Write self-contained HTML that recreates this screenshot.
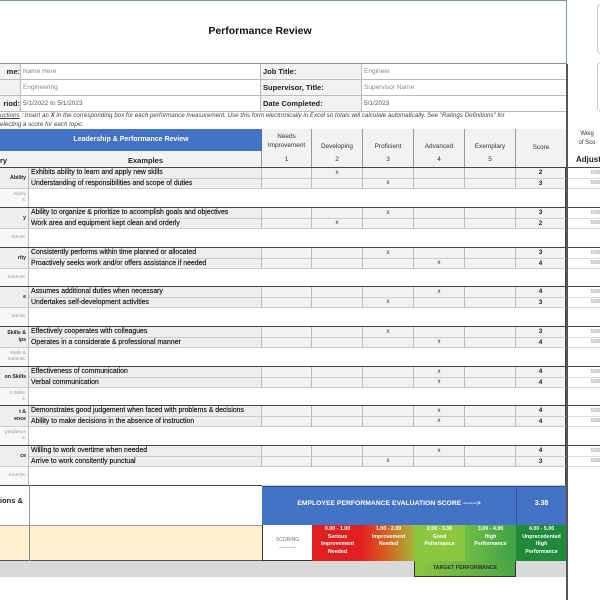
<!DOCTYPE html>
<html><head><meta charset="utf-8"><style>
*{margin:0;padding:0;box-sizing:border-box}
body{width:600px;height:600px;overflow:hidden;background:#fff;font-family:"Liberation Sans",sans-serif;position:relative;color:#222}
.a{position:absolute}
.g{position:absolute;left:0;width:600px;height:40px;display:grid;grid-template-columns:29px 233px 50px 51px 51px 51px 51px 50px 34px;grid-template-rows:10.5px 10.5px 19px;border-top:1.5px solid #444}
.g div{border-right:1px solid #bbb;border-bottom:1px solid #ccc;font-size:6.4px;overflow:hidden;white-space:nowrap;display:flex;align-items:center}
.g .c{grid-row:1/3;background:#eee;font-size:5.2px;font-weight:bold;justify-content:flex-end;padding-right:2px;white-space:normal;text-align:right;line-height:7px}
.g .e{background:#eee;padding-left:2px;font-size:6.9px;color:#111;-webkit-text-stroke:0.15px #111}
.g .r{background:#f2f2f2;justify-content:center;font-size:6px;color:#333}
.g .s{background:#f2f2f2;justify-content:center;font-weight:bold;border-right:1.5px solid #444}
.g .w{justify-content:flex-end;color:#888;font-size:5.5px;border-right:none;border-bottom:1px solid #ddd}
.g .cl{background:#f7f7f7;font-size:4.8px;color:#999;justify-content:flex-end;padding-right:2px;white-space:normal;text-align:right;line-height:6px}
.g .cm{grid-column:2/9;background:#fff;border-right:1.5px solid #444}
.g .cw{border:none}
.inf{position:absolute;height:16px;border-bottom:1px solid #bbb;border-right:1px solid #bbb;font-size:6.5px;display:flex;align-items:center;padding-left:2px}
.lb{font-weight:bold;font-size:7.5px;background:#f2f2f2}
.vl{color:#888}
.hd{position:absolute;top:129px;height:39px;border-right:1px solid #999;border-bottom:1.5px solid #444;background:#f2f2f2;font-size:6.4px;text-align:center;color:#333}
.hd span{position:absolute;left:0;right:0}
.sc{position:absolute;top:525px;height:36px;color:#fff;font-size:5.3px;font-weight:bold;text-align:center;line-height:7.5px;padding-top:1px}
</style></head><body>
<div class="a" style="left:0;top:0;width:567px;height:64px;border-top:1px solid #7a9a8a;border-right:1px solid #7a9a8a;border-bottom:1px solid #7a9a8a"></div>
<div class="a" style="left:0;top:25px;width:520px;text-align:center;font-weight:bold;font-size:10.5px;color:#111">Performance Review</div>
<div class="a" style="left:597px;top:4px;width:10px;height:50px;border:1px solid #ccc;border-radius:4px"></div>
<div class="a" style="left:597px;top:62px;width:10px;height:50px;border:1px solid #ccc;border-radius:4px"></div>
<div class="inf lb" style="left:0;top:64px;width:21px;justify-content:flex-end">me:</div>
<div class="inf vl" style="left:21px;top:64px;width:240px">Name Here</div>
<div class="inf lb" style="left:261px;top:64px;width:101px">Job Title:</div>
<div class="inf vl" style="left:362px;top:64px;width:205px">Engineer</div>
<div class="inf lb" style="left:0;top:80px;width:21px"></div>
<div class="inf vl" style="left:21px;top:80px;width:240px">Engineering</div>
<div class="inf lb" style="left:261px;top:80px;width:101px">Supervisor, Title:</div>
<div class="inf vl" style="left:362px;top:80px;width:205px">Supervisor Name</div>
<div class="inf lb" style="left:0;top:96px;width:21px;justify-content:flex-end">riod:</div>
<div class="inf" style="left:21px;top:96px;width:240px;color:#555">5/1/2022 to 5/1/2023</div>
<div class="inf lb" style="left:261px;top:96px;width:101px">Date Completed:</div>
<div class="inf" style="left:362px;top:96px;width:205px;color:#555">5/1/2023</div>
<div class="a" style="left:0;top:112px;width:566px;font-size:6.2px;font-style:italic;color:#444;line-height:8.5px"><u>uctions</u> : Insert an <b>X</b> in the corresponding box for each performance measurement. Use this form electronically in Excel so totals will calculate automatically. See "Ratings Definitions" for<br>electing a score for each topic.</div>
<div class="a" style="left:0;top:129px;width:262px;height:22px;background:#4472c4;color:#fff;font-weight:bold;font-size:7px;text-align:center;line-height:22px">Leadership &amp; Performance Review</div>
<div class="a" style="left:0;top:151px;width:262px;height:17px;background:#f2f2f2;border-bottom:1.5px solid #444;border-right:1px solid #999;font-size:7.5px;font-weight:bold"><span class="a" style="left:0;top:5px">ry</span><span class="a" style="left:29px;width:233px;text-align:center;top:5px">Examples</span></div>
<div class="hd" style="left:262px;width:50px"><span style="top:3px;line-height:9px">Needs<br>Improvement</span><span style="top:27px">1</span></div>
<div class="hd" style="left:312px;width:51px"><span style="top:14px">Developing</span><span style="top:27px">2</span></div>
<div class="hd" style="left:363px;width:51px"><span style="top:14px">Proficient</span><span style="top:27px">3</span></div>
<div class="hd" style="left:414px;width:51px"><span style="top:14px">Advanced</span><span style="top:27px">4</span></div>
<div class="hd" style="left:465px;width:51px"><span style="top:14px">Exemplary</span><span style="top:27px">5</span></div>
<div class="hd" style="left:516px;width:51px;border-right:1.5px solid #444"><span style="top:15px">Score</span></div>
<div class="a" style="left:567px;top:130px;width:40px;font-size:6px;text-align:center;line-height:9px;color:#333">Weig<br>of Sco</div>
<div class="a" style="left:576px;top:155px;font-size:8px;font-weight:bold;color:#222">Adjust</div>

<div class="g" style="top:167px"><div class="c">Ability</div><div class="e">Exhibits ability to learn and apply new skills</div><div class="r"></div><div class="r">x</div><div class="r"></div><div class="r"></div><div class="r"></div><div class="s">2</div><div class="w">509</div><div class="e">Understanding of responsibilities and scope of duties</div><div class="r"></div><div class="r"></div><div class="r">x</div><div class="r"></div><div class="r"></div><div class="s">3</div><div class="w">509</div><div class="cl">Ability<br>s:</div><div class="cm"></div><div class="cw"></div></div>
<div class="g" style="top:207px"><div class="c">y</div><div class="e">Ability to organize &amp; prioritize to accomplish goals and objectives</div><div class="r"></div><div class="r"></div><div class="r">x</div><div class="r"></div><div class="r"></div><div class="s">3</div><div class="w">509</div><div class="e">Work area and equipment kept clean and orderly</div><div class="r"></div><div class="r">x</div><div class="r"></div><div class="r"></div><div class="r"></div><div class="s">2</div><div class="w">509</div><div class="cl">ments:</div><div class="cm"></div><div class="cw"></div></div>
<div class="g" style="top:247px"><div class="c">rity</div><div class="e">Consistently performs within time planned or allocated</div><div class="r"></div><div class="r"></div><div class="r">x</div><div class="r"></div><div class="r"></div><div class="s">3</div><div class="w">509</div><div class="e">Proactively seeks work and/or offers assistance if needed</div><div class="r"></div><div class="r"></div><div class="r"></div><div class="r">x</div><div class="r"></div><div class="s">4</div><div class="w">509</div><div class="cl">mments:</div><div class="cm"></div><div class="cw"></div></div>
<div class="g" style="top:286px"><div class="c">e</div><div class="e">Assumes additional duties when necessary</div><div class="r"></div><div class="r"></div><div class="r"></div><div class="r">x</div><div class="r"></div><div class="s">4</div><div class="w">509</div><div class="e">Undertakes self-development activities</div><div class="r"></div><div class="r"></div><div class="r">x</div><div class="r"></div><div class="r"></div><div class="s">3</div><div class="w">509</div><div class="cl">ments:</div><div class="cm"></div><div class="cw"></div></div>
<div class="g" style="top:326px"><div class="c">Skills &amp;<br>ips</div><div class="e">Effectively cooperates with colleagues</div><div class="r"></div><div class="r"></div><div class="r">x</div><div class="r"></div><div class="r"></div><div class="s">3</div><div class="w">509</div><div class="e">Operates in a considerate &amp; professional manner</div><div class="r"></div><div class="r"></div><div class="r"></div><div class="r">x</div><div class="r"></div><div class="s">4</div><div class="w">509</div><div class="cl">Skills &amp;<br>mments:</div><div class="cm"></div><div class="cw"></div></div>
<div class="g" style="top:366px"><div class="c">on Skills</div><div class="e">Effectiveness of communication</div><div class="r"></div><div class="r"></div><div class="r"></div><div class="r">x</div><div class="r"></div><div class="s">4</div><div class="w">509</div><div class="e">Verbal communication</div><div class="r"></div><div class="r"></div><div class="r"></div><div class="r">x</div><div class="r"></div><div class="s">4</div><div class="w">509</div><div class="cl">n Skills:<br>s:</div><div class="cm"></div><div class="cw"></div></div>
<div class="g" style="top:405px"><div class="c">t &amp;<br>ence</div><div class="e">Demonstrates good judgement when faced with problems &amp; decisions</div><div class="r"></div><div class="r"></div><div class="r"></div><div class="r">x</div><div class="r"></div><div class="s">4</div><div class="w">509</div><div class="e">Ability to make decisions in the absence of instruction</div><div class="r"></div><div class="r"></div><div class="r"></div><div class="r">x</div><div class="r"></div><div class="s">4</div><div class="w">509</div><div class="cl">pendence<br>s:</div><div class="cm"></div><div class="cw"></div></div>
<div class="g" style="top:445px"><div class="c">ce</div><div class="e">Willing to work overtime when needed</div><div class="r"></div><div class="r"></div><div class="r"></div><div class="r">x</div><div class="r"></div><div class="s">4</div><div class="w">509</div><div class="e">Arrive to work consitently punctual</div><div class="r"></div><div class="r"></div><div class="r">x</div><div class="r"></div><div class="r"></div><div class="s">3</div><div class="w">509</div><div class="cl">ements:</div><div class="cm"></div><div class="cw"></div></div>

<div class="a" style="left:0;top:485px;width:262px;height:41px;border-top:1.5px solid #444;border-bottom:1px solid #999"></div>
<div class="a" style="left:29px;top:485px;width:1px;height:77px;background:#999"></div>
<div class="a" style="left:0;top:496px;font-size:7.5px;font-weight:bold;line-height:10px">ions &amp;</div>
<div class="a" style="left:0;top:526px;width:262px;height:35px;background:#fdf1d2;border-bottom:1.5px solid #555"></div>
<div class="a" style="left:29px;top:526px;width:1px;height:35px;background:#888"></div>
<div class="a" style="left:262px;top:486px;width:305px;height:40px;background:#4472c4;border-top:1.5px solid #2a4a8a"></div>
<div class="a" style="left:262px;top:500px;width:254px;text-align:center;color:#fff;font-weight:bold;font-size:6.8px">EMPLOYEE PERFORMANCE EVALUATION SCORE ------&gt;</div>
<div class="a" style="left:516px;top:486px;width:1px;height:40px;background:#2f55a0"></div>
<div class="a" style="left:516px;top:500px;width:51px;text-align:center;color:#fff;font-weight:bold;font-size:7px">3.38</div>
<div class="a" style="left:262px;top:525px;width:50px;height:36px;background:#fff;border-left:1.5px solid #333;border-bottom:1.5px solid #333;font-size:5px;color:#777;text-align:center;padding-top:11px;line-height:8px">SCORING<br>———›</div>
<div class="sc" style="left:312px;width:51px;background:#e02020">0.00 - 1.00<br>Serious<br>Improvement<br>Needed</div>
<div class="sc" style="left:363px;width:51px;background:linear-gradient(90deg,#e02424,#d8591f 40%,#a9b43a 100%)">1.00 - 2.00<br>Improvement<br>Needed</div>
<div class="sc" style="left:414px;width:51px;background:#8dc63f">2.00 - 3.00<br>Good<br>Peformance</div>
<div class="sc" style="left:465px;width:51px;background:linear-gradient(90deg,#6fbf45,#3fa046)">3.00 - 4.00<br>High<br>Performance</div>
<div class="sc" style="left:516px;width:51px;background:#1e8a3a">4.00 - 5.00<br>Unprecedented<br>High<br>Performance</div>
<div class="a" style="left:0;top:561px;width:567px;height:16px;background:#d9d9d9"></div>
<div class="a" style="left:414px;top:561px;width:102px;height:16px;background:linear-gradient(90deg,#8dc63f,#4aa546);border:1px solid #333;border-top:none;font-size:5.3px;font-weight:bold;color:#333;text-align:center;line-height:15px">TARGET PERFORMANCE</div>
<div class="a" style="left:566px;top:64px;width:1.5px;height:536px;background:#555"></div>
</body></html>
